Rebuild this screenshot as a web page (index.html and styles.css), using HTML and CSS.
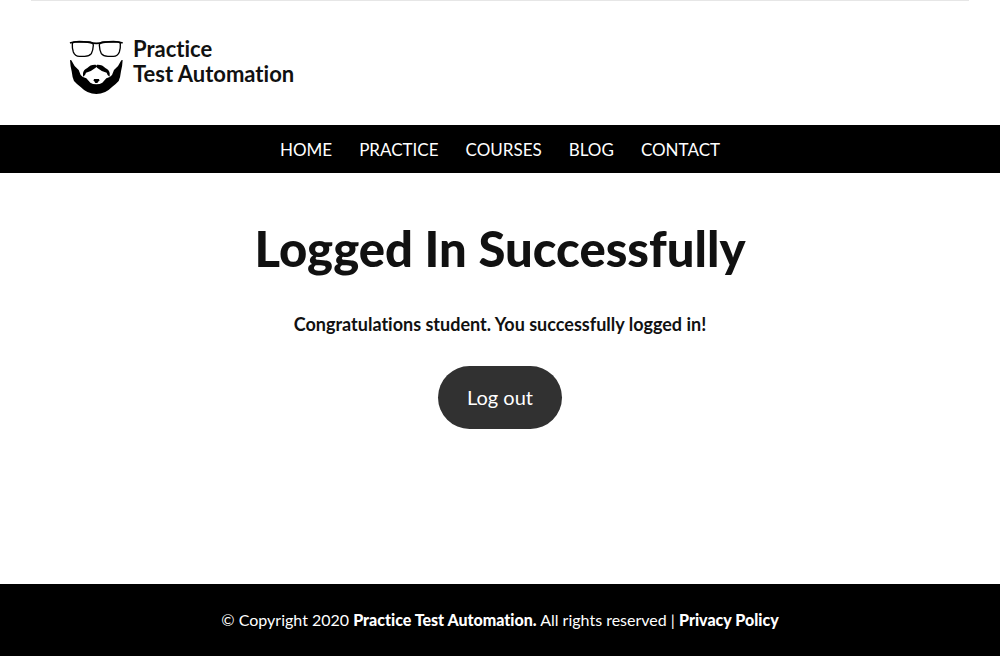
FILE: index.html
```html
<!DOCTYPE html>
<html lang="en">
<head>
<meta charset="utf-8">
<meta name="viewport" content="width=device-width, initial-scale=1">
<title>Logged In Successfully | Practice Test Automation</title>
<link rel="stylesheet" href="styles.css">
</head>
<body>
<header class="site-header">
  <a class="brand" href="#">
    <svg class="brand-mark" viewBox="27 27 168 168" aria-hidden="true">
      <g fill="none" stroke="#000">
        <path stroke-width="4" d="M37 41 Q38 36 47 36 L85 36 Q100 36 100 46 Q99 63 94 71 Q88 79 74 79 L58 79 Q45 79 40 66 Q36 53 37 41Z"/>
        <path stroke-width="4" d="M181 41 Q180 36 171 36 L133 36 Q118 36 118 46 Q119 63 124 71 Q130 79 144 79 L160 79 Q173 79 178 66 Q182 53 181 41Z"/>
        <path stroke-width="5" d="M30 39 Q48 31 88 37 Q109 43 130 37 Q170 31 188 39"/>
      </g>
      <path d="M30 90 L34 91 Q41 108 56 120 L62 135 Q68 143 79 145 L91 158 Q98 163 109 163 Q120 163 127 158 L139 145 Q150 143 156 135 L162 120 Q177 108 184 91 L188 90 Q187 110 183 124 Q181 143 176 153 Q168 162 156 171 Q136 192 109 192 Q82 192 62 171 Q50 162 42 153 Q37 143 35 124 Q31 110 30 90Z"/>
      <path d="M107 104 Q91 103 82 114 Q71 119 69 129 L69 140 Q77 135 78 128 Q94 124 107 113 L109 110 L111 113 Q124 124 140 128 Q141 135 149 140 L149 129 Q147 119 136 114 Q127 103 111 104 L109 107Z"/>
      <path d="M102 147 L117 147 L118 151 L112 159 L106 159 L101 151Z"/>
    </svg>
    <span class="brand-name">Practice<br>Test Automation</span>
  </a>
</header>
<nav class="site-nav" aria-label="Primary">
  <a href="#">HOME</a>
  <a href="#">PRACTICE</a>
  <a href="#">COURSES</a>
  <a href="#">BLOG</a>
  <a href="#">CONTACT</a>
</nav>
<main class="content">
  <h1 class="title">Logged In Successfully</h1>
  <p class="message">Congratulations student. You successfully logged in!</p>
  <a class="logout" href="#">Log out</a>
</main>
<footer class="site-footer">
  © Copyright 2020 <strong>Practice Test Automation.</strong> All rights reserved | <a href="#">Privacy Policy</a>
</footer>
</body>
</html>
```
FILE: styles.css
```css
* {
  box-sizing: border-box;
}

body {
  display: flex;
  flex-direction: column;
  min-height: 100vh;
  margin: 0;
  background: #fff;
  color: #111;
  font-family: Lato, "Open Sans", sans-serif;
  font-variant-ligatures: none;
}

a {
  color: inherit;
  text-decoration: none;
}

.site-header {
  margin: 0 31px;
  padding: 35px 38px 28px;
  border-top: 1px solid #e6e6e6;
}

.brand {
  display: inline-flex;
  align-items: flex-start;
  gap: 8px;
  vertical-align: top;
}

.brand-mark {
  width: 56px;
  height: 56px;
  margin: 3px 0 2px;
}

.brand-name {
  font-size: 22px;
  font-weight: 700;
  line-height: 25px;
}

.site-nav {
  display: flex;
  flex-wrap: wrap;
  justify-content: center;
  column-gap: 27px;
  padding: 2px 24px 0;
  background: #000;
  color: #fff;
  font-size: 17px;
  line-height: 46px;
}

.content {
  flex: 1;
  display: flex;
  flex-direction: column;
  align-items: center;
  padding: 45px 30px;
  text-align: center;
}

.title {
  margin: 0;
  font-family: "Lato Black", Lato, "Open Sans", sans-serif;
  font-size: 49px;
  font-weight: 900;
  line-height: 60px;
}

.message {
  margin: 33px 0 28px;
  font-size: 18px;
  font-weight: 700;
  line-height: 27px;
}

.logout {
  padding: 16px 29px;
  border-radius: 32px;
  background: #313131;
  color: #fff;
  font-size: 20px;
  line-height: 31px;
}

.site-footer {
  padding: 24px 30px;
  background: #000;
  color: #fff;
  font-size: 16px;
  line-height: 24px;
  text-align: center;
}

.site-footer strong,
.site-footer a {
  font-weight: 900;
}
```
